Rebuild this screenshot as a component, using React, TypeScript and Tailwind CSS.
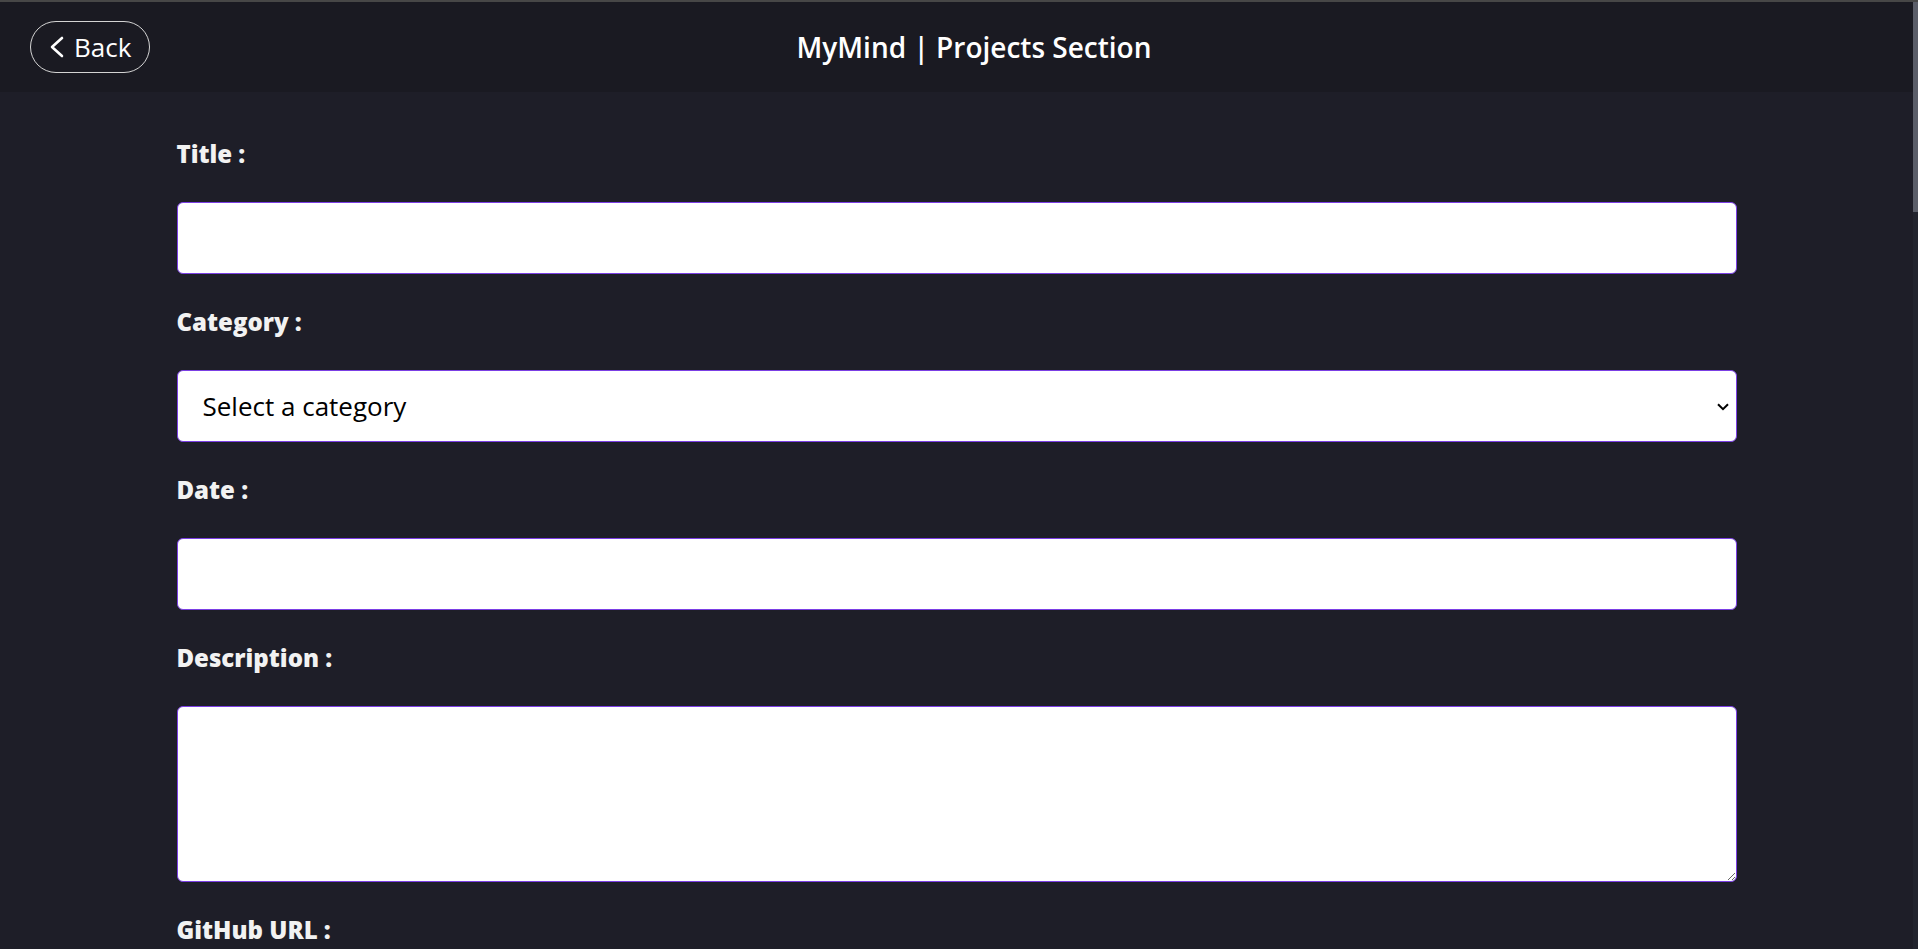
import React, { useState } from "react";

const labelClass =
  "block text-[24px] leading-9 font-extrabold text-[#f2f2f2] mt-[30px] mb-[30px]";
const inputClass =
  "block w-full h-[72px] bg-white text-black text-[26px] px-[25px] rounded-[6px] border border-[#7b3fe4] outline-none";

const categories = ["Web Development", "Mobile App", "Machine Learning", "Design", "Other"];

const App: React.FC = () => {
  const [title, setTitle] = useState("");
  const [category, setCategory] = useState("");
  const [date, setDate] = useState("");
  const [description, setDescription] = useState("");
  const [github, setGithub] = useState("");
  const [live, setLive] = useState("");
  const [tech, setTech] = useState("");

  return (
    <div
      className="h-screen flex flex-col bg-[#1e1e28] text-white overflow-hidden"
      style={{ fontFamily: '"Open Sans", "Noto Sans", sans-serif' }}
    >
      <div className="h-[2px] bg-[#474747] shrink-0" />
      <div className="flex flex-1 min-h-0">
        <div className="flex-1 overflow-hidden">
          <header className="h-[90px] bg-[#1a1a22] flex items-center px-[30px]">
            <button className="flex items-center h-[52px] w-[120px] rounded-full border border-[#d4d4d4] pl-[19px] text-[26px] font-medium text-white">
              <svg width="14" height="22" viewBox="0 0 14 22" fill="none" className="mr-[10px]">
                <polyline
                  points="12,2 2,11 12,20"
                  stroke="white"
                  strokeWidth="2.6"
                  strokeLinecap="round"
                  strokeLinejoin="round"
                />
              </svg>
              Back
            </button>
            <h1 className="flex-1 text-center text-[28px] font-semibold text-white">
              MyMind | Projects Section
            </h1>
            <div className="w-[85px]" />
          </header>

          <form
            className="w-[1560px] mx-auto pt-[14px] pb-[120px]"
            onSubmit={(e) => e.preventDefault()}
          >
            <label className={labelClass}>Title :</label>
            <input
              className={inputClass}
              value={title}
              onChange={(e) => setTitle(e.target.value)}
            />

            <label className={labelClass}>Category :</label>
            <div className="relative">
              <select
                className={`${inputClass} appearance-none`}
                value={category}
                onChange={(e) => setCategory(e.target.value)}
              >
                <option value="">Select a category</option>
                {categories.map((c) => (
                  <option key={c} value={c}>
                    {c}
                  </option>
                ))}
              </select>
              <svg
                width="12"
                height="8"
                viewBox="0 0 12 8"
                fill="none"
                className="absolute right-[8px] top-[33px] pointer-events-none"
              >
                <polyline points="1,1.2 6,6.2 11,1.2" stroke="black" strokeWidth="2" />
              </svg>
            </div>

            <label className={labelClass}>Date :</label>
            <input
              className={inputClass}
              value={date}
              onChange={(e) => setDate(e.target.value)}
            />

            <label className={labelClass}>Description :</label>
            <textarea
              className="block w-full h-[176px] bg-white text-black text-[22px] px-[25px] py-3 rounded-[6px] border border-[#7b3fe4] outline-none"
              value={description}
              onChange={(e) => setDescription(e.target.value)}
            />

            <label className={labelClass}>GitHub URL :</label>
            <input
              className={inputClass}
              value={github}
              onChange={(e) => setGithub(e.target.value)}
            />

            <label className={labelClass}>Live URL :</label>
            <input
              className={inputClass}
              value={live}
              onChange={(e) => setLive(e.target.value)}
            />

            <label className={labelClass}>Technologies :</label>
            <input
              className={inputClass}
              value={tech}
              onChange={(e) => setTech(e.target.value)}
            />

            <button
              type="submit"
              className="mt-[50px] h-[60px] px-10 rounded-full bg-[#7b3fe4] text-[22px] font-semibold text-white"
            >
              Add Project
            </button>
          </form>
        </div>
        {/* scrollbar */}
        <div className="w-[5px] shrink-0 bg-[#22242e]">
          <div className="h-[210px] bg-[#5b5e69]" />
        </div>
      </div>
    </div>
  );
};

export default App;
